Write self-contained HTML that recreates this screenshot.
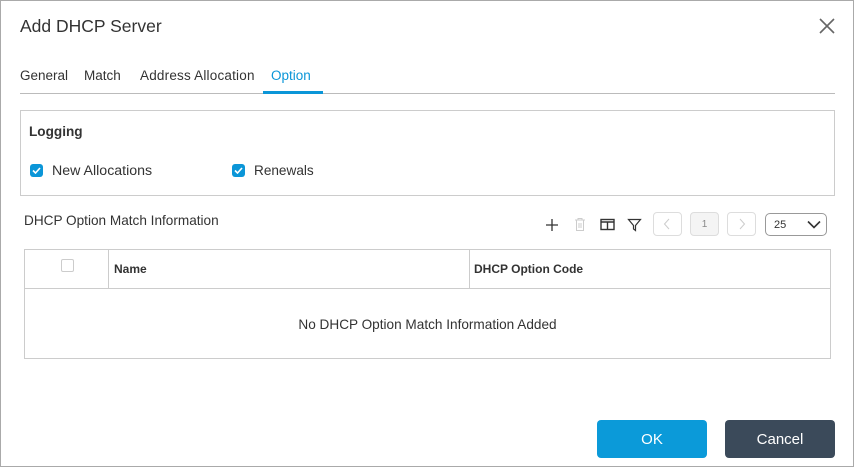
<!DOCTYPE html>
<html><head><style>
*{box-sizing:border-box;margin:0;padding:0}
body{width:854px;height:467px;background:#fff;font-family:"Liberation Sans",sans-serif;color:#333;position:relative;overflow:hidden}
.frame{position:absolute;left:0;top:0;width:854px;height:467px;border:1px solid #aaa}
.abs{position:absolute}
.t{font-size:13.6px;color:#333;line-height:16px}
.tab{position:absolute;top:68px;font-size:13.5px;line-height:16px;color:#333}
.cb{position:absolute;width:13px;height:13px;background:#0b96d8;border-radius:3px}
.cb svg{position:absolute;left:2px;top:3px}
.pb{position:absolute;top:212px;width:29px;height:24px;border:1px solid #ddd;border-radius:4px;background:#fff}
</style></head><body>
<div class="frame"></div>
<div class="abs" style="left:20px;top:16px;font-size:17.5px;color:#333">Add DHCP Server</div>
<svg class="abs" style="left:818px;top:17px" width="18" height="18"><path d="M2 2L16 16M16 2L2 16" stroke="#666" stroke-width="1.6"/></svg>
<div class="tab" style="left:20px">General</div>
<div class="tab" style="left:84px">Match</div>
<div class="tab" style="left:140px;letter-spacing:0.2px">Address Allocation</div>
<div class="tab" style="left:271px;color:#0b96d8">Option</div>
<div class="abs" style="left:20px;top:93px;width:815px;height:1px;background:#bbb"></div>
<div class="abs" style="left:263px;top:91px;width:60px;height:3px;background:#0b96d8"></div>
<div class="abs" style="left:20px;top:110px;width:815px;height:86px;border:1px solid #ccc"></div>
<div class="abs t" style="left:29px;top:124px;font-weight:bold">Logging</div>
<div class="cb" style="left:30px;top:164px"><svg width="9" height="7"><path d="M1 3.5L3.5 6L8 1" stroke="#fff" stroke-width="1.6" fill="none"/></svg></div>
<div class="abs t" style="left:52px;top:163px;font-size:14.2px">New Allocations</div>
<div class="cb" style="left:232px;top:164px"><svg width="9" height="7"><path d="M1 3.5L3.5 6L8 1" stroke="#fff" stroke-width="1.6" fill="none"/></svg></div>
<div class="abs t" style="left:254px;top:163px">Renewals</div>
<div class="abs t" style="left:24px;top:213px">DHCP Option Match Information</div>
<svg class="abs" style="left:545px;top:218px" width="14" height="14"><path d="M7 1V13M1 7H13" stroke="#333" stroke-width="1.3"/></svg>
<svg class="abs" style="left:574px;top:217px" width="12" height="15"><path d="M1 3H11M4 3V1.5H8V3M2.5 3.5V13.5H9.5V3.5M5 6V11M7 6V11" stroke="#ccc" stroke-width="1" fill="none"/></svg>
<svg class="abs" style="left:600px;top:218px" width="15" height="13"><rect x="1" y="1.5" width="13" height="10" stroke="#333" stroke-width="1.4" fill="none"/><path d="M1 4H14M7.5 4V11.5" stroke="#333" stroke-width="1.4"/></svg>
<svg class="abs" style="left:627px;top:218px" width="15" height="14"><path d="M1.5 1.5H13.5L8.5 7.5V12.5L6.5 11V7.5Z" stroke="#333" stroke-width="1.2" fill="none"/></svg>
<div class="pb" style="left:653px"><svg width="27" height="22"><path d="M15 6L10.5 11L15 16" stroke="#ccc" fill="none"/></svg></div>
<div class="pb" style="left:690px;background:#f4f4f4;font-size:10px;color:#888;text-align:center;line-height:24px">1</div>
<div class="pb" style="left:727px"><svg width="27" height="22"><path d="M12 6L16.5 11L12 16" stroke="#ccc" fill="none"/></svg></div>
<div class="abs" style="left:765px;top:213px;width:62px;height:23px;border:1px solid #999;border-radius:5px;font-size:11px;line-height:22px;padding-left:8px;color:#333">25
<svg class="abs" style="left:41px;top:6px" width="14" height="9"><path d="M1 1.5L7 7.5L13 1.5" stroke="#333" stroke-width="1.6" fill="none"/></svg></div>
<div class="abs" style="left:24px;top:249px;width:807px;height:110px;border:1px solid #ccc"></div>
<div class="abs" style="left:25px;top:288px;width:805px;height:1px;background:#ccc"></div>
<div class="abs" style="left:108px;top:250px;width:1px;height:38px;background:#ccc"></div>
<div class="abs" style="left:469px;top:250px;width:1px;height:38px;background:#ccc"></div>
<div class="abs" style="left:61px;top:259px;width:13px;height:13px;border:1px solid #ccc;border-radius:2px"></div>
<div class="abs" style="left:114px;top:262px;font-size:12px;font-weight:bold">Name</div>
<div class="abs" style="left:474px;top:262px;font-size:12px;font-weight:bold">DHCP Option Code</div>
<div class="abs t" style="left:24px;top:317px;width:807px;text-align:center">No DHCP Option Match Information Added</div>
<div class="abs" style="left:597px;top:420px;width:110px;height:38px;background:#0b9ad9;border-radius:4px;color:#fff;font-size:15px;text-align:center;line-height:40px">OK</div>
<div class="abs" style="left:725px;top:420px;width:110px;height:38px;background:#3b4a5a;border-radius:4px;color:#fff;font-size:15px;text-align:center;line-height:40px">Cancel</div>
</body></html>
